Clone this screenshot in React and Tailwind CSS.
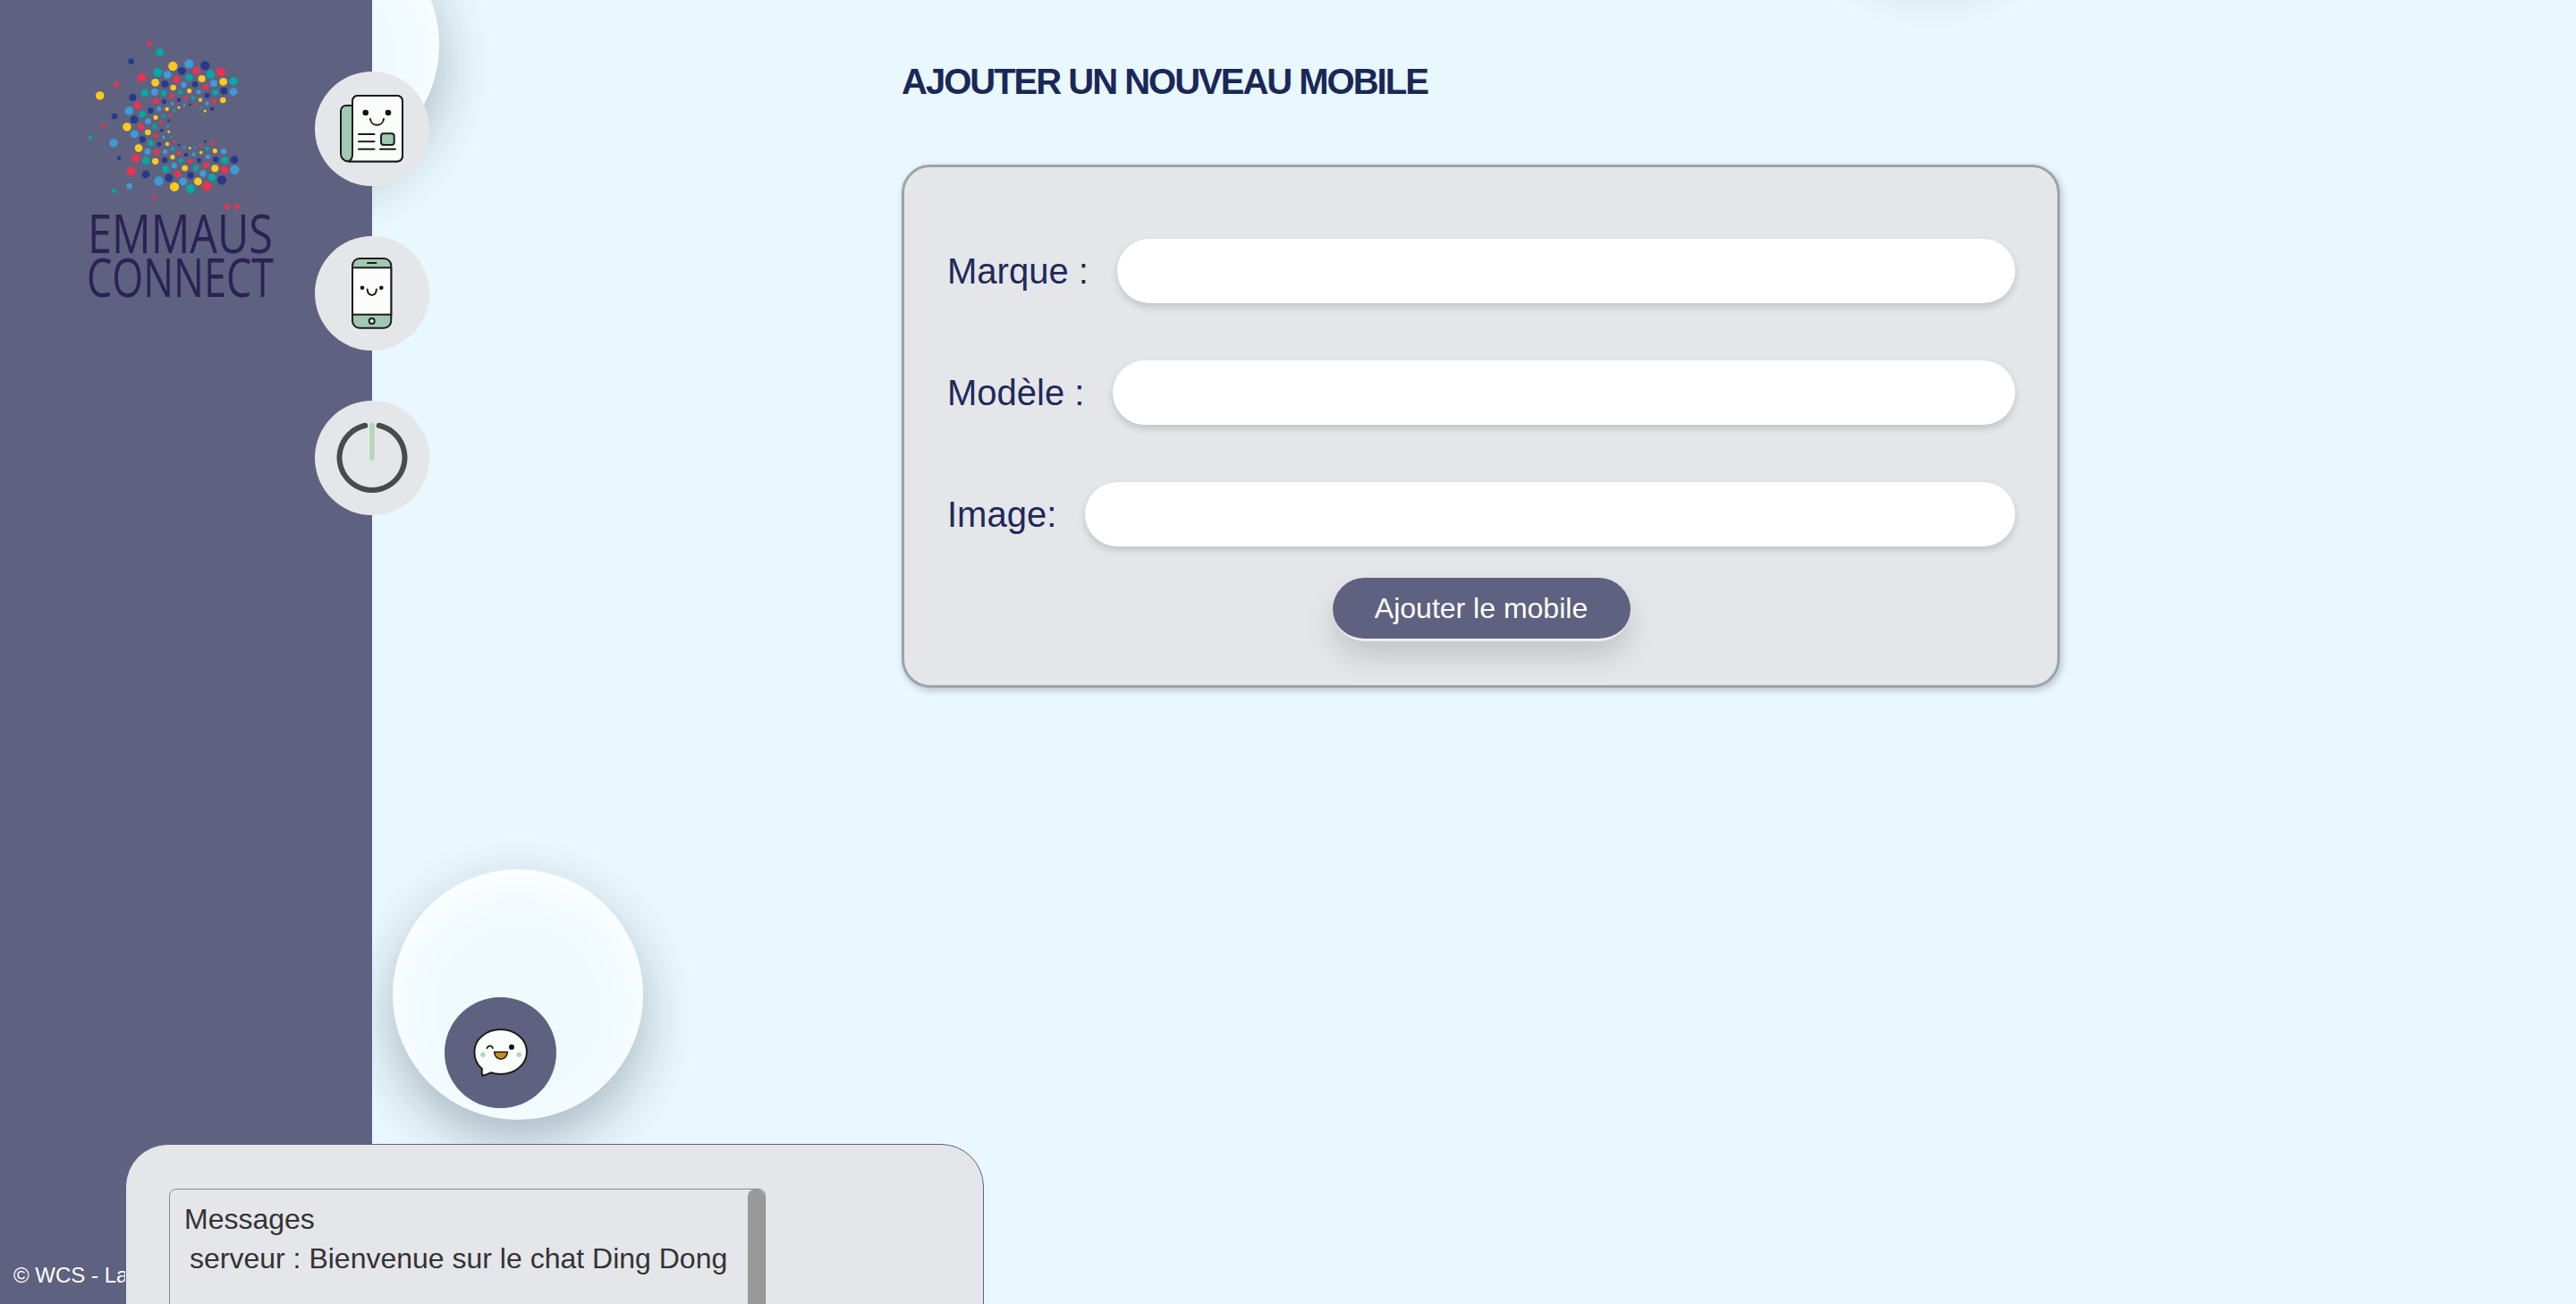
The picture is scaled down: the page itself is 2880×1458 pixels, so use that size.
const R = '#e8344e';
const T = '#00a9a5';
const B = '#3f9ad6';
const N = '#26398c';
const Y = '#fdc91a';

// logo dots, measured on a 3x crop of the logo
const DOTS = [
  [261,56,7,R],[296,86,12,T],[200,116,9,N],[235,170,13,R],[151,194,8,R],[95,231,13,Y],[205,237,11,N],[144,300,9,N],[108,333,6,R],[63,371,6,T],[141,390,13,B],[159,440,6,N],[200,484,14,R],[249,495,12,N],[194,534,9,B],[143,550,7,T],[276,571,6,R],
  [340,132,14,Y],[394,124,14,B],[448,130,14,N],[289,153,14,T],[322,161,12,B],[370,148,12,N],[419,148,12,R],[466,160,13,T],[500,151,14,R],
  [281,187,12,Y],[313,192,11,N],[352,176,11,R],[394,170,11,T],[437,174,11,Y],[477,190,11,B],[509,184,12,Y],[543,183,13,T],
  [246,222,12,T],[279,219,11,B],[309,223,9,T],[341,204,9,Y],[376,194,9,B],[414,193,9,N],[450,202,9,R],[482,220,9,T],[511,215,11,N],[543,218,12,B],
  [283,249,9,R],[311,251,7,N],[336,232,7,R],[365,220,7,T],[395,215,7,Y],[426,218,7,B],[455,230,8,N],[479,249,7,R],[508,246,9,Y],
  [222,264,12,R],[265,281,9,N],[293,275,7,B],[320,276,6,Y],[338,258,5,B],[360,245,6,N],[383,239,6,R],[408,239,6,T],[432,245,6,Y],[454,257,6,B],[472,275,6,N],
  [360,271,4,Y],[345,282,4,T],[378,263,3.5,B],[397,261,4,N],[416,264,4,R],[433,271,4,T],[448,283,4,Y],
  [193,282,13,B],[237,293,10,T],[210,311,12,N],[282,304,7,Y],[308,298,5,T],[333,297,4,R],[256,317,9,B],[326,314,4,N],[301,322,5,R],[186,336,13,Y],[232,336,10,R],[278,335,7,T],[323,334,3.5,B],[302,347,5.5,N],[326,352,4,Y],[211,360,12,B],[256,354,9,Y],[282,366,7,R],[309,371,5,B],[334,370,4,T],[238,378,10,N],[266,390,9,T],[294,394,7,N],[321,393,6,Y],[345,385,4,R],
  [225,407,12,Y],[255,418,10,B],[285,421,9,R],[314,419,7,B],[339,410,6,T],[360,397,4,N],[378,404,4,B],[397,407,4,Y],[415,404,4,T],[433,397,4,R],[448,385,4,N],[473,391,6,R],[455,408,6,T],[481,416,7,Y],[510,418,9,B],
  [216,441,13,R],[249,449,12,T],[281,451,10,Y],[312,447,9,N],[339,437,7,Y],[360,423,6,R],[384,429,6,N],[410,428,6,B],[434,422,5,Y],[457,436,7,B],[484,445,9,N],[514,448,11,T],[546,446,12,N],
  [316,477,11,T],[344,465,9,B],[367,449,7,T],[398,452,7,R],[428,448,7,N],[380,474,9,Y],[417,474,9,T],[452,464,9,R],[481,475,11,Y],[513,480,12,R],[547,480,14,B],
  [293,517,14,B],[327,507,12,N],[356,493,10,R],[399,498,10,N],[441,492,10,B],[471,505,12,T],[504,514,14,N],[374,519,12,B],[424,519,12,Y],[345,537,14,Y],[399,543,14,T],[454,535,14,R],
];

const FIELDS = ['Marque :', 'Modèle :', 'Image:'];

function Logo() {
  return (
    <svg viewBox="0 0 240 320" className="w-[240px] h-[320px] shrink-0">
      <g transform="scale(0.3333)">
        {DOTS.map(([x, y, r, c], i) => <circle key={i} cx={x} cy={y} r={r * 1.1} fill={c} />)}
      </g>
      <circle cx="174" cy="201" r="3" fill={R} />
      <circle cx="185" cy="201" r="3" fill={R} />
      <text x="18" y="253" fontSize="61" fontWeight="500" fill="#2a2255" fontFamily="Open Sans" textLength="207" lengthAdjust="spacingAndGlyphs">EMMAUS</text>
      <text x="17" y="302" fontSize="61" fontWeight="500" fill="#2a2255" fontFamily="Open Sans" textLength="209" lengthAdjust="spacingAndGlyphs">CONNECT</text>
    </svg>
  );
}

function NewsIcon() {
  return (
    <svg viewBox="0 0 128 128" className="w-full h-full" fill="none" stroke="#1c1c1c" strokeWidth="2" strokeLinecap="round">
      <path d="M42 38h-7a6 6 0 0 0-6 6v48a8.500 8.500 0 0 0 8.500 8.500H92a6 6 0 0 0 6-6V33a6 6 0 0 0-6-6H48a6 6 0 0 0-6 6v59" fill="#9fc9b0" />
      <path d="M48 27h44a6 6 0 0 1 6 6v61.500a6 6 0 0 1-6 6H37.500a8.500 8.500 0 0 0 4.500-8V33a6 6 0 0 1 6-6z" fill="#fbfdfb" />
      <circle cx="56.700" cy="46" r="3.300" fill="#111" stroke="none" />
      <circle cx="82" cy="46" r="3.300" fill="#111" stroke="none" />
      <path d="M62 53c1 9 14 9 15 0" />
      <path d="M49 70h17.500M49 78.300h17.500M49 86.700h17.500M73 86.700h17" />
      <rect x="74" y="69.300" width="14.700" height="12.700" rx="3" fill="#9fc9b0" />
    </svg>
  );
}

function PhoneIcon() {
  return (
    <svg viewBox="0 0 128 128" className="w-full h-full" fill="none" stroke="#1c1c1c" strokeWidth="2" strokeLinecap="round">
      <rect x="42" y="25" width="43.300" height="77.700" rx="8" fill="#9fc9b0" />
      <rect x="42" y="35.300" width="43.300" height="52.400" fill="#fbfdfb" />
      <path d="M59 30h9.500" />
      <circle cx="63.700" cy="95" r="3" fill="#fff" />
      <circle cx="53" cy="57.700" r="2.300" fill="#111" stroke="none" />
      <circle cx="74.300" cy="57.700" r="2.300" fill="#111" stroke="none" />
      <path d="M58.700 59.500c.6 8.500 9.600 8.500 10.200 0" />
    </svg>
  );
}

function PowerIcon() {
  return (
    <svg viewBox="0 0 128 128" className="w-full h-full" fill="none" strokeLinecap="round">
      <path d="M56.300 27.800A36.500 36.500 0 1 0 71.700 27.800" stroke="#4a4a4a" strokeWidth="6" />
      <path d="M64 27v37.500" stroke="#b3d7b8" strokeWidth="5.500" />
    </svg>
  );
}

function ChatIcon() {
  return (
    <svg viewBox="0 0 125 124" className="w-full h-full" fill="none" stroke="#1c1c1c" strokeLinecap="round">
      <path d="M62.700 36c16 0 29.300 11 29.300 25s-13 25-29.300 25c-4 0-8-.6-11-1.700-3 1.600-6 2.700-9.500 3.400-.8-2.500-.6-5-.3-7.700C36.800 76 33.400 69 33.400 61c0-14 13.300-25 29.300-25z" fill="#fbfdfb" strokeWidth="2" />
      <path d="M47.500 57c1.500-3.500 5-3.500 6.500 0" strokeWidth="1.800" />
      <circle cx="75" cy="55.700" r="3" fill="#111" stroke="none" />
      <path d="M55.700 61.300h14.600c0 4-3 8-7.300 8s-7.300-4-7.300-8z" fill="#c98a1f" strokeWidth="1.600" />
      <circle cx="43" cy="64.300" r="2.700" fill="#a8d8bc" stroke="none" />
      <circle cx="83.300" cy="64.300" r="2.700" fill="#a8d8bc" stroke="none" />
    </svg>
  );
}

function NavButton({ children }) {
  return <div className="w-32 h-32 rounded-full bg-[#e5e6ea]">{children}</div>;
}

const bubble = 'absolute w-[280px] h-[280px] rounded-full bg-[#effaff] shadow-[inset_0_16px_60px_#ffffff,0_24px_60px_rgba(20,40,50,0.3)]';

export default function App() {
  return (
    <div className="relative flex h-screen overflow-hidden bg-[#e9f7fe] font-['Liberation_Sans',Arial,sans-serif]">
      <div className={`${bubble} left-[211px] top-[-90px]`} />
      <div className={`${bubble} left-[2020px] top-[-332px]`} />

      <aside className="relative z-10 w-[416px] shrink-0 flex flex-col bg-[#5f6180]">
        <div className="flex flex-1 pl-20 pt-[30px]">
          <Logo />
          <nav className="flex flex-col gap-14 pt-[50px] ml-8">
            <NavButton><NewsIcon /></NavButton>
            <NavButton><PhoneIcon /></NavButton>
            <NavButton><PowerIcon /></NavButton>
          </nav>
        </div>
        <footer className="pl-[15px] pb-4 text-2xl leading-8 text-white whitespace-nowrap">© WCS - La</footer>
      </aside>

      <main className="flex-1 pl-[592px] pt-[67px]">
        <h1 className="text-[40px] leading-[48px] font-bold tracking-[-2px] text-[#1a2857] mb-[69px]">AJOUTER UN NOUVEAU MOBILE</h1>
        <form className="w-[1295px] h-[585px] pt-20 pl-[48px] pr-[47px] rounded-[32px] border-[3px] border-[#9ca3af] bg-[#e5e6ea] shadow-[2px_3px_8px_rgba(0,0,0,0.22)]">
          <div className="flex flex-col gap-16">
            {FIELDS.map((label) => (
              <label key={label} className="flex items-center gap-8 text-[40px] text-[#1e2a5a]">
                {label}
                <input className="flex-1 h-[72px] rounded-full bg-white outline-none shadow-[0_4px_8px_rgba(0,0,0,0.16)]" />
              </label>
            ))}
          </div>
          <button type="button" className="block mx-auto mt-[35px] w-[333px] h-[71px] rounded-full bg-[#5f6180] border-b-[3px] border-[#eceef2] text-[32px] text-white shadow-[0_18px_32px_rgba(0,0,0,0.14)]">
            Ajouter le mobile
          </button>
        </form>
      </main>

      <div className={`${bubble} left-[439px] top-[972px]`}>
        <div className="absolute left-[58px] top-[143px] w-[125px] h-[124px] rounded-full bg-[#5f6180]">
          <ChatIcon />
        </div>
      </div>

      <section className="absolute z-20 left-[140px] top-[1279px] w-[960px] h-[300px] pt-[49px] pl-[48px] rounded-[48px] border border-[#5f6180] bg-[#e5e6ea] text-[32px] leading-[44px] text-[#333333]">
        <div className="flex w-[667px] h-[240px] rounded-lg border border-[#8a8a8a]">
          <div className="flex-1 pt-[11px] pl-[16px]">
            <p>Messages</p>
            <p className="pl-[6px]">serveur : Bienvenue sur le chat Ding Dong</p>
          </div>
          <div className="w-[19px] rounded-t-lg bg-[#999999]" />
        </div>
      </section>
    </div>
  );
}
